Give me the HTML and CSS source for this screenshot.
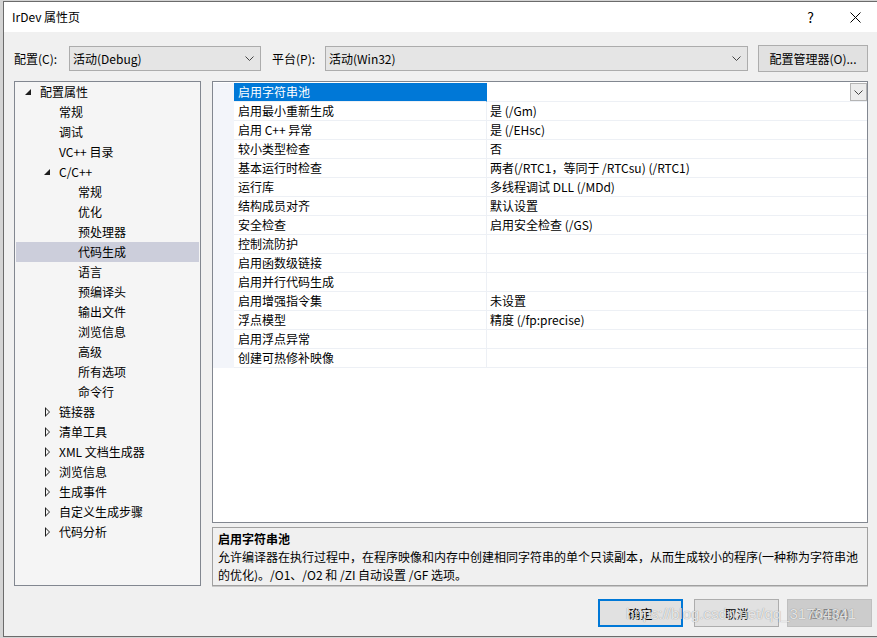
FILE: index.html
```html
<!DOCTYPE html>
<html lang="zh-CN">
  <head>
    <meta charset="UTF-8" />
    <title>IrDev 属性页</title>
    <link rel="stylesheet" href="styles.css">
  </head>
  <body>
    <div class="window">
      <div class="titlebar">
        <span class="title">IrDev 属性页</span>
        <span class="caption-btn help">?</span>
        <span class="caption-btn close">
          <svg width="11" height="11" viewBox="0 0 11 11"><path d="M0.5 0.5 L10.5 10.5 M10.5 0.5 L0.5 10.5" stroke="#000" stroke-width="1" fill="none"/></svg>
        </span>
      </div>

      <div class="client">
        <div class="toolbar">
          <label class="tb-label cfg-label">配置(C):</label>
          <div class="combo cfg-combo">
            <span>活动(Debug)</span>
            <svg class="chev" width="9" height="5" viewBox="0 0 9 5"><path d="M0.5 0.5 L4.5 4.5 L8.5 0.5" stroke="#444" fill="none"/></svg>
          </div>
          <label class="tb-label plat-label">平台(P):</label>
          <div class="combo plat-combo">
            <span>活动(Win32)</span>
            <svg class="chev" width="9" height="5" viewBox="0 0 9 5"><path d="M0.5 0.5 L4.5 4.5 L8.5 0.5" stroke="#444" fill="none"/></svg>
          </div>
          <button class="btn cfg-manager">配置管理器(O)...</button>
        </div>

        <div class="main">
          <div class="tree">
            <div class="node l1"><span class="toggle open"></span>配置属性</div>
            <div class="node l2"><span class="toggle"></span>常规</div>
            <div class="node l2"><span class="toggle"></span>调试</div>
            <div class="node l2"><span class="toggle"></span>VC++ 目录</div>
            <div class="node l2"><span class="toggle open"></span>C/C++</div>
            <div class="node l3"><span class="toggle"></span>常规</div>
            <div class="node l3"><span class="toggle"></span>优化</div>
            <div class="node l3"><span class="toggle"></span>预处理器</div>
            <div class="node l3 selected"><span class="toggle"></span>代码生成</div>
            <div class="node l3"><span class="toggle"></span>语言</div>
            <div class="node l3"><span class="toggle"></span>预编译头</div>
            <div class="node l3"><span class="toggle"></span>输出文件</div>
            <div class="node l3"><span class="toggle"></span>浏览信息</div>
            <div class="node l3"><span class="toggle"></span>高级</div>
            <div class="node l3"><span class="toggle"></span>所有选项</div>
            <div class="node l3"><span class="toggle"></span>命令行</div>
            <div class="node l2"><span class="toggle closed"></span>链接器</div>
            <div class="node l2"><span class="toggle closed"></span>清单工具</div>
            <div class="node l2"><span class="toggle closed"></span>XML 文档生成器</div>
            <div class="node l2"><span class="toggle closed"></span>浏览信息</div>
            <div class="node l2"><span class="toggle closed"></span>生成事件</div>
            <div class="node l2"><span class="toggle closed"></span>自定义生成步骤</div>
            <div class="node l2"><span class="toggle closed"></span>代码分析</div>
          </div>

          <div class="right">
            <div class="grid">
              <div class="prop-row">
                <div class="gutter"></div>
                <div class="name active">启用字符串池</div>
                <div class="value">
                  <span></span>
                  <span class="drop">
                    <svg width="9" height="5" viewBox="0 0 9 5"><path d="M0.5 0.5 L4.5 4.5 L8.5 0.5" stroke="#444" fill="none"/></svg>
                  </span>
                </div>
              </div>
              <div class="prop-row"><div class="gutter"></div><div class="name">启用最小重新生成</div><div class="value">是 (/Gm)</div></div>
              <div class="prop-row"><div class="gutter"></div><div class="name">启用 C++ 异常</div><div class="value">是 (/EHsc)</div></div>
              <div class="prop-row"><div class="gutter"></div><div class="name">较小类型检查</div><div class="value">否</div></div>
              <div class="prop-row"><div class="gutter"></div><div class="name">基本运行时检查</div><div class="value">两者(/RTC1，等同于 /RTCsu) (/RTC1)</div></div>
              <div class="prop-row"><div class="gutter"></div><div class="name">运行库</div><div class="value">多线程调试 DLL (/MDd)</div></div>
              <div class="prop-row"><div class="gutter"></div><div class="name">结构成员对齐</div><div class="value">默认设置</div></div>
              <div class="prop-row"><div class="gutter"></div><div class="name">安全检查</div><div class="value">启用安全检查 (/GS)</div></div>
              <div class="prop-row"><div class="gutter"></div><div class="name">控制流防护</div><div class="value"></div></div>
              <div class="prop-row"><div class="gutter"></div><div class="name">启用函数级链接</div><div class="value"></div></div>
              <div class="prop-row"><div class="gutter"></div><div class="name">启用并行代码生成</div><div class="value"></div></div>
              <div class="prop-row"><div class="gutter"></div><div class="name">启用增强指令集</div><div class="value">未设置</div></div>
              <div class="prop-row"><div class="gutter"></div><div class="name">浮点模型</div><div class="value">精度 (/fp:precise)</div></div>
              <div class="prop-row"><div class="gutter"></div><div class="name">启用浮点异常</div><div class="value"></div></div>
              <div class="prop-row"><div class="gutter"></div><div class="name">创建可热修补映像</div><div class="value"></div></div>
            </div>

            <div class="desc">
              <div class="desc-title">启用字符串池</div>
              <div class="desc-text">允许编译器在执行过程中，在程序映像和内存中创建相同字符串的单个只读副本，从而生成较小的程序(一种称为字符串池的优化)。/O1、/O2 和 /ZI 自动设置 /GF 选项。</div>
            </div>
          </div>
        </div>

        <div class="buttons">
          <button class="btn default">确定</button>
          <button class="btn cancel">取消</button>
          <button class="btn disabled">应用(A)</button>
        </div>
      </div>

      <div class="watermark">https://blog.csdn.net/qq_31764341</div>
    </div>
  </body>
</html>
```

FILE: styles.css
```css
* {
  box-sizing: border-box;
}

html,
body {
  margin: 0;
  height: 100%;
}

body {
  background-color: #d4d4d4;
  font-family: "Noto Sans CJK SC", "Noto Sans", sans-serif;
  font-size: 12px;
  color: #000;
  overflow: hidden;
}

.window {
  position: relative;
  margin: 1px 0 0 3px;
  width: 876px;
  height: 636px;
  border: 1px solid #6b6b6b;
  background-color: #f0f0f0;
  display: flex;
  flex-direction: column;
}

/* title bar */
.titlebar {
  height: 30px;
  background-color: #fff;
  display: flex;
  align-items: center;
  padding-left: 8px;
}

.title {
  flex: 1;
  line-height: 16px;
}

.caption-btn {
  width: 45px;
  height: 30px;
  display: flex;
  align-items: center;
  justify-content: center;
}

.help {
  font-size: 14px;
}

/* client area */
.client {
  flex: 1;
  display: flex;
  flex-direction: column;
  padding: 13px 10px 0 10px;
}

.toolbar {
  display: flex;
  align-items: center;
  height: 27px;
}

.tb-label {
  line-height: 16px;
}

.cfg-label {
  width: 55px;
}

.plat-label {
  width: 53px;
  margin-left: 11px;
}

.combo {
  height: 25px;
  background-color: #e5e5e5;
  border: 1px solid #acacac;
  display: flex;
  align-items: center;
  justify-content: space-between;
  padding: 0 6px 0 3px;
  line-height: 16px;
}

.cfg-combo {
  width: 192px;
}

.plat-combo {
  flex: 1;
}

.btn {
  font-family: inherit;
  font-size: 12px;
  color: #000;
  background-color: #e1e1e1;
  border: 1px solid #adadad;
  padding: 0;
}

.cfg-manager {
  width: 110px;
  height: 27px;
  margin-left: 10px;
}

/* main area */
.main {
  display: flex;
  gap: 11px;
  height: 505px;
  margin-top: 9px;
}

.tree {
  width: 187px;
  border: 1px solid #828790;
  background-color: #f5f5f5;
  padding: 0 1px 1px 1px;
}

.node {
  display: flex;
  align-items: center;
  height: 20px;
  line-height: 20px;
  white-space: nowrap;
}

.node.l1 {
  padding-left: 5px;
}

.node.l2 {
  padding-left: 24px;
}

.node.l3 {
  padding-left: 43px;
}

.node.selected {
  background-color: #cccedb;
}

.toggle {
  position: relative;
  width: 19px;
  height: 20px;
  flex-shrink: 0;
}

.toggle.open::before {
  content: "";
  position: absolute;
  left: 4px;
  top: 7px;
  border-style: solid;
  border-width: 0 0 6px 6px;
  border-color: transparent transparent #1e1e1e transparent;
}

.toggle.closed::before {
  content: "";
  position: absolute;
  left: 5px;
  top: 5px;
  width: 0;
  height: 0;
  border-style: solid;
  border-width: 5px 0 5px 5px;
  border-color: transparent transparent transparent #1e1e1e;
}

.toggle.closed::after {
  content: "";
  position: absolute;
  left: 6px;
  top: 7px;
  border-style: solid;
  border-width: 3px 0 3px 3px;
  border-color: transparent transparent transparent #f5f5f5;
}

.right {
  flex: 1;
  display: flex;
  flex-direction: column;
  gap: 4px;
}

/* property grid */
.grid {
  height: 442px;
  border: 1px solid #828790;
  background-color: #fff;
  padding-top: 1px;
}

.prop-row {
  display: flex;
  height: 19px;
}

.gutter {
  width: 21px;
  background-color: #f3f5fa;
}

.name {
  width: 253px;
  padding-left: 4px;
  line-height: 18px;
  border-bottom: 1px solid #edf0f5;
  border-right: 1px solid #edf0f5;
  white-space: nowrap;
}

.name.active {
  background-color: #0078d7;
  color: #fff;
  border-right-color: #0078d7;
}

.value {
  flex: 1;
  padding-left: 3px;
  line-height: 18px;
  border-bottom: 1px solid #edf0f5;
  white-space: nowrap;
  display: flex;
  justify-content: space-between;
}

.drop {
  width: 17px;
  height: 18px;
  border: 1px solid #b4b4b4;
  background-color: #ececec;
  display: flex;
  align-items: center;
  justify-content: center;
}

/* description panel */
.desc {
  height: 59px;
  border: 1px solid #a0a0a0;
  box-shadow: 0 1px 0 #c8c8c8;
  background-color: #f0f0f0;
  padding: 2px 0 0 5px;
  line-height: 18px;
}

.desc-title {
  font-weight: bold;
}

.desc-text {
  width: 645px;
}

/* dialog buttons */
.buttons {
  display: flex;
  justify-content: flex-end;
  margin: 13px -4px 0 0;
}

.buttons .btn {
  width: 85px;
  height: 28px;
}

.btn.default {
  border: 2px solid #0078d7;
}

.btn.cancel {
  margin-left: 11px;
}

.btn.disabled {
  margin-left: 8px;
  background-color: #cccccc;
  border-color: #bfbfbf;
  color: #838383;
}

.watermark {
  position: absolute;
  left: 622px;
  top: 603px;
  font-family: "Liberation Sans", Arial, sans-serif;
  font-size: 15px;
  color: rgba(255, 255, 255, 0.8);
  text-shadow: 0 0 1px rgba(0, 0, 0, 0.45);
  pointer-events: none;
}
```
